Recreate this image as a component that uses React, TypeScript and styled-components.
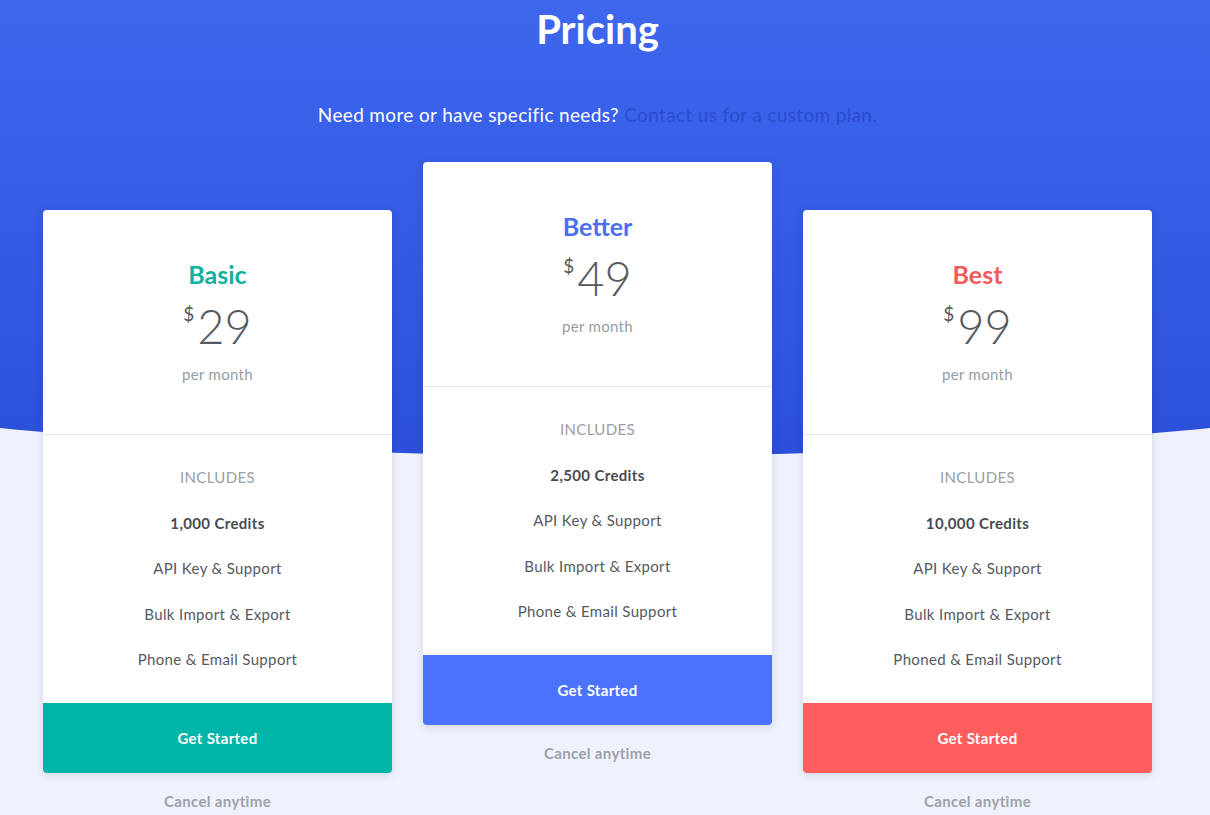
import React from 'react';
import styled, { createGlobalStyle } from 'styled-components';

interface Plan {
  name: string;
  price: number;
  credits: string;
  features: string[];
  color: string;
  titleColor: string;
  featured?: boolean;
}

const plans: Plan[] = [
  {
    name: 'Basic',
    price: 29,
    credits: '1,000 Credits',
    features: ['API Key & Support', 'Bulk Import & Export', 'Phone & Email Support'],
    color: '#00b4a7',
    titleColor: '#12b09f',
  },
  {
    name: 'Better',
    price: 49,
    credits: '2,500 Credits',
    features: ['API Key & Support', 'Bulk Import & Export', 'Phone & Email Support'],
    color: '#4b72fd',
    titleColor: '#4a6ff2',
    featured: true,
  },
  {
    name: 'Best',
    price: 99,
    credits: '10,000 Credits',
    features: ['API Key & Support', 'Bulk Import & Export', 'Phoned & Email Support'],
    color: '#fe5d5d',
    titleColor: '#f35a5a',
  },
];

const GlobalStyle = createGlobalStyle`
  html, body {
    margin: 0;
    padding: 0;
    background: #eff2fc;
    font-family: Lato, "Open Sans", sans-serif;
  }
`;

const Page = styled.div`
  position: relative;
  min-height: 815px;
  overflow: hidden;
  padding: 0 58px 0 43px;
  box-sizing: border-box;

  &::before {
    content: '';
    position: absolute;
    top: 0;
    left: -605px;
    width: 2420px;
    height: 456px;
    background: linear-gradient(180deg, #3e67ee 0%, #2b4fd9 100%);
    border-radius: 0 0 50% 50% / 0 0 209px 209px;
    z-index: 0;
  }
`;

const Content = styled.div`
  position: relative;
  z-index: 1;
  display: flex;
  flex-direction: column;
  align-items: center;
`;

const Title = styled.h1`
  margin: 6px 0 0;
  font-size: 40px;
  line-height: 46px;
  font-weight: 700;
  color: #fff;
`;

const Subtitle = styled.p`
  margin: 51px 0 0;
  font-size: 19px;
  line-height: 24px;
  letter-spacing: 0.35px;
  color: #fff;

  span {
    color: #2b4cd0;
  }
`;

const Cards = styled.div`
  margin-top: 35px;
  display: flex;
  align-items: flex-start;
  gap: 31px;
`;

const Column = styled.div<{ $featured?: boolean }>`
  width: 349px;
  margin-top: ${(p) => (p.$featured ? '0' : '48px')};
  display: flex;
  flex-direction: column;
  align-items: center;
`;

const Card = styled.div`
  width: 100%;
  background: #fff;
  border-radius: 4px;
  box-shadow: 0 2px 8px rgba(30, 40, 90, 0.14);
  display: flex;
  flex-direction: column;
  overflow: hidden;
`;

const CardHead = styled.div`
  padding: 49px 0 50px;
  border-bottom: 1px solid #e1e4f4;
  display: flex;
  flex-direction: column;
  align-items: center;
`;

const PlanName = styled.h2<{ $color: string }>`
  margin: 0;
  font-size: 25px;
  line-height: 30px;
  font-weight: 700;
  color: ${(p) => p.$color};
`;

const Price = styled.div`
  margin-top: 11px;
  display: flex;
  align-items: flex-start;
  color: #555a60;
  font-size: 47px;
  line-height: 52px;
  font-weight: 300;

  sup {
    font-size: 19px;
    line-height: 19px;
    margin: 4px 3px 0 0;
    font-weight: 400;
  }
`;

const Period = styled.div`
  margin-top: 12px;
  font-size: 15px;
  line-height: 20px;
  letter-spacing: 0.3px;
  color: #979ba1;
`;

const CardBody = styled.ul`
  list-style: none;
  margin: 0;
  padding: 32px 0 34px;
  display: flex;
  flex-direction: column;
  align-items: center;
  gap: 25.5px;
`;

const Feature = styled.li<{ $strong?: boolean; $muted?: boolean }>`
  font-size: 15px;
  line-height: 20px;
  letter-spacing: 0.35px;
  color: ${(p) => (p.$muted ? '#9a9ea4' : p.$strong ? '#474b51' : '#55595f')};
  font-weight: ${(p) => (p.$strong ? 700 : 400)};
  text-transform: ${(p) => (p.$muted ? 'uppercase' : 'none')};
`;

const Button = styled.button<{ $color: string }>`
  height: 70px;
  border: none;
  background: ${(p) => p.$color};
  color: #fff;
  font-family: inherit;
  font-size: 15px;
  letter-spacing: 0.3px;
  font-weight: 700;
  cursor: pointer;
`;

const Cancel = styled.div`
  margin-top: 18px;
  font-size: 15px;
  line-height: 20px;
  letter-spacing: 0.35px;
  font-weight: 700;
  color: #9da1a8;
`;

const PlanCard = ({ plan }: { plan: Plan }) => (
  <Column $featured={plan.featured}>
    <Card>
      <CardHead>
        <PlanName $color={plan.titleColor}>{plan.name}</PlanName>
        <Price>
          <sup>$</sup>
          {plan.price}
        </Price>
        <Period>per month</Period>
      </CardHead>
      <CardBody>
        <Feature $muted>Includes</Feature>
        <Feature $strong>{plan.credits}</Feature>
        {plan.features.map((f) => (
          <Feature key={f}>{f}</Feature>
        ))}
      </CardBody>
      <Button $color={plan.color}>Get Started</Button>
    </Card>
    <Cancel>Cancel anytime</Cancel>
  </Column>
);

const App = () => (
  <>
    <GlobalStyle />
    <Page>
      <Content>
        <Title>Pricing</Title>
        <Subtitle>
          Need more or have specific needs? <span>Contact us for a custom plan.</span>
        </Subtitle>
        <Cards>
          {plans.map((p) => (
            <PlanCard key={p.name} plan={p} />
          ))}
        </Cards>
      </Content>
    </Page>
  </>
);

export default App;
